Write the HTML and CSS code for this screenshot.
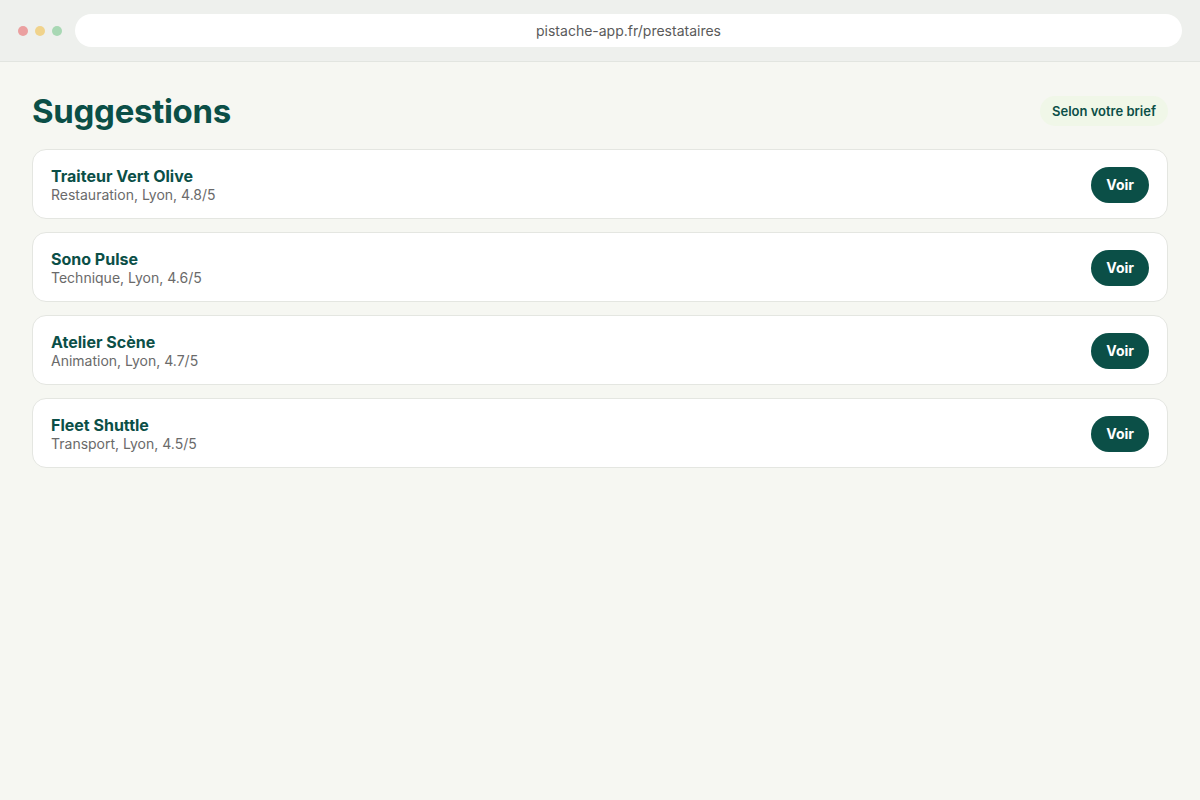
FILE: index.html
```html
<!DOCTYPE html>
<html lang="fr">
<head>
  <meta charset="UTF-8">
  <meta name="viewport" content="width=device-width, initial-scale=1.0">
  <title>Prestataires – Pistache</title>
  <link rel="stylesheet" href="styles.css">
</head>
<body>

<div class="browser">
  <div class="dots">
    <span class="dot red"></span>
    <span class="dot yellow"></span>
    <span class="dot green"></span>
  </div>
  <div class="url">pistache-app.fr/prestataires</div>
</div>

<main class="page">
  <header class="page-head">
    <h1>Suggestions</h1>
    <span class="badge">Selon votre brief</span>
  </header>

  <ul class="list">
    <li class="card">
      <div class="info">
        <strong>Traiteur Vert Olive</strong>
        <span>Restauration, Lyon, 4.8/5</span>
      </div>
      <button class="btn">Voir</button>
    </li>
    <li class="card">
      <div class="info">
        <strong>Sono Pulse</strong>
        <span>Technique, Lyon, 4.6/5</span>
      </div>
      <button class="btn">Voir</button>
    </li>
    <li class="card">
      <div class="info">
        <strong>Atelier Scène</strong>
        <span>Animation, Lyon, 4.7/5</span>
      </div>
      <button class="btn">Voir</button>
    </li>
    <li class="card">
      <div class="info">
        <strong>Fleet Shuttle</strong>
        <span>Transport, Lyon, 4.5/5</span>
      </div>
      <button class="btn">Voir</button>
    </li>
  </ul>
</main>

</body>
</html>
```

FILE: styles.css
```css
* {
  margin: 0;
  padding: 0;
  box-sizing: border-box;
}

body {
  font-family: Inter, "Noto Sans", sans-serif;
  background: #f6f7f2;
  color: #0b4f47;
  min-height: 100vh;
}

/* fake window chrome */
.browser {
  height: 62px;
  background: #eef0ed;
  border-bottom: 1px solid #e2e5e0;
  display: flex;
  align-items: center;
  gap: 13px;
  padding: 0 18px;
}

.dots {
  display: flex;
  gap: 7px;
}

.dot {
  width: 10px;
  height: 10px;
  border-radius: 50%;
}
.dot.red { background: #eba0a0; }
.dot.yellow { background: #f0d38c; }
.dot.green { background: #a8d8b4; }

.url {
  flex: 1;
  height: 33px;
  background: #fff;
  border-radius: 17px;
  display: flex;
  align-items: center;
  justify-content: center;
  font-size: 14px;
  color: #5a5a5a;
}

/* page */
.page {
  padding: 28px 32px;
}

.page-head {
  display: flex;
  justify-content: space-between;
  align-items: center;
  margin-bottom: 17px;
}

.page-head h1 {
  font-size: 33px;
  font-weight: 700;
  letter-spacing: -0.3px;
  line-height: 42px;
}

.badge {
  background: #f0f7e8;
  border-radius: 15px;
  padding: 7px 12px;
  font-size: 13px;
  font-weight: 600;
  color: #0b4f47;
}

.list {
  list-style: none;
  display: flex;
  flex-direction: column;
  gap: 13px;
}

.card {
  background: #fff;
  border: 1px solid #e4e6e1;
  border-radius: 14px;
  padding: 16px 18px 15px;
  display: flex;
  justify-content: space-between;
  align-items: center;
}

.info {
  display: flex;
  flex-direction: column;
}

.info strong {
  font-size: 16px;
  font-weight: 700;
  line-height: 20px;
}

.info span {
  font-size: 14px;
  line-height: 17px;
  color: #6a6a6a;
}

.btn {
  font-family: inherit;
  background: #0b4f47;
  color: #fff;
  border: none;
  border-radius: 18px;
  height: 36px;
  padding: 0 15px;
  font-size: 14px;
  font-weight: 700;
  cursor: pointer;
}
```
